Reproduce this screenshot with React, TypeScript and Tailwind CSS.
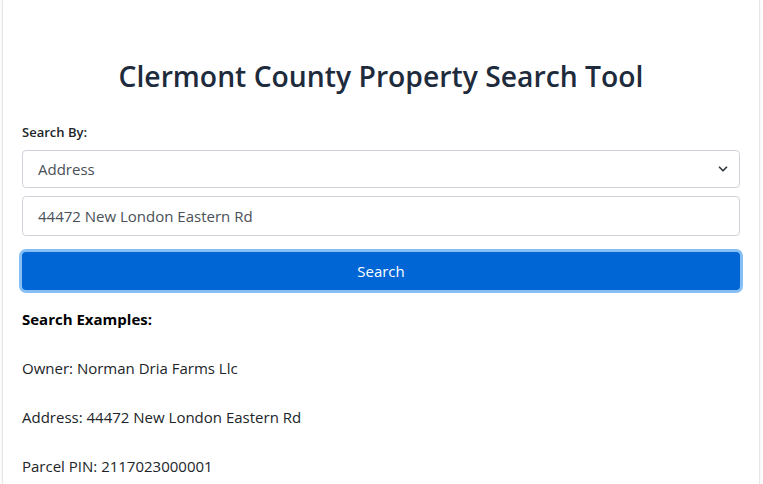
import { ChevronDown } from 'lucide-react'

const EXAMPLES = [
  { label: 'Owner', value: 'Norman Dria Farms Llc' },
  { label: 'Address', value: '44472 New London Eastern Rd' },
  { label: 'Parcel PIN', value: '2117023000001' },
]

export default function App() {
  return (
    <div className="min-h-screen bg-white font-['Open_Sans',sans-serif] text-[#212529]">
      <div className="ml-[2px] mr-[3px] min-h-screen border-x border-[#e6e6e6] px-[19px] pt-[57px] shadow-[0_0_4px_rgba(0,0,0,0.06)]">
        {/* Header */}
        <h1 className="text-center text-[28.3px] font-semibold leading-[38px] text-[#1e2b3c]">
          Clermont County Property Search Tool
        </h1>

        {/* Form */}
        <label className="mt-[27px] block text-[13px] font-semibold leading-5">Search By:</label>
        <div className="relative mt-2">
          <select
            defaultValue="address"
            className="h-[38px] w-full appearance-none rounded border border-[#ced4da] bg-white pl-[15px] text-[15px] text-[#495057] outline-none"
          >
            <option value="owner">Owner</option>
            <option value="address">Address</option>
            <option value="parcel">Parcel PIN</option>
          </select>
          <ChevronDown className="pointer-events-none absolute right-[10px] top-[12px] h-[14px] w-[14px] text-[#343a40]" strokeWidth={3} />
        </div>
        <input
          type="text"
          defaultValue="44472 New London Eastern Rd"
          className="mt-2 block h-[40px] w-full rounded border border-[#ced4da] pl-[15px] text-[15px] text-[#495057] outline-none"
        />
        <button className="mt-4 block h-[38px] w-full rounded bg-[#0066d6] text-[15px] text-white ring-[3px] ring-[#86bff5]">
          Search
        </button>

        {/* Examples */}
        <h3 className="mt-[17px] text-[15px] font-bold leading-6 text-black">Search Examples:</h3>
        <div className="mt-[25px] flex flex-col gap-[25px]">
          {EXAMPLES.map((ex) => (
            <p key={ex.label} className="text-[15px] leading-6">
              {ex.label}: {ex.value}
            </p>
          ))}
        </div>
      </div>
    </div>
  )
}
